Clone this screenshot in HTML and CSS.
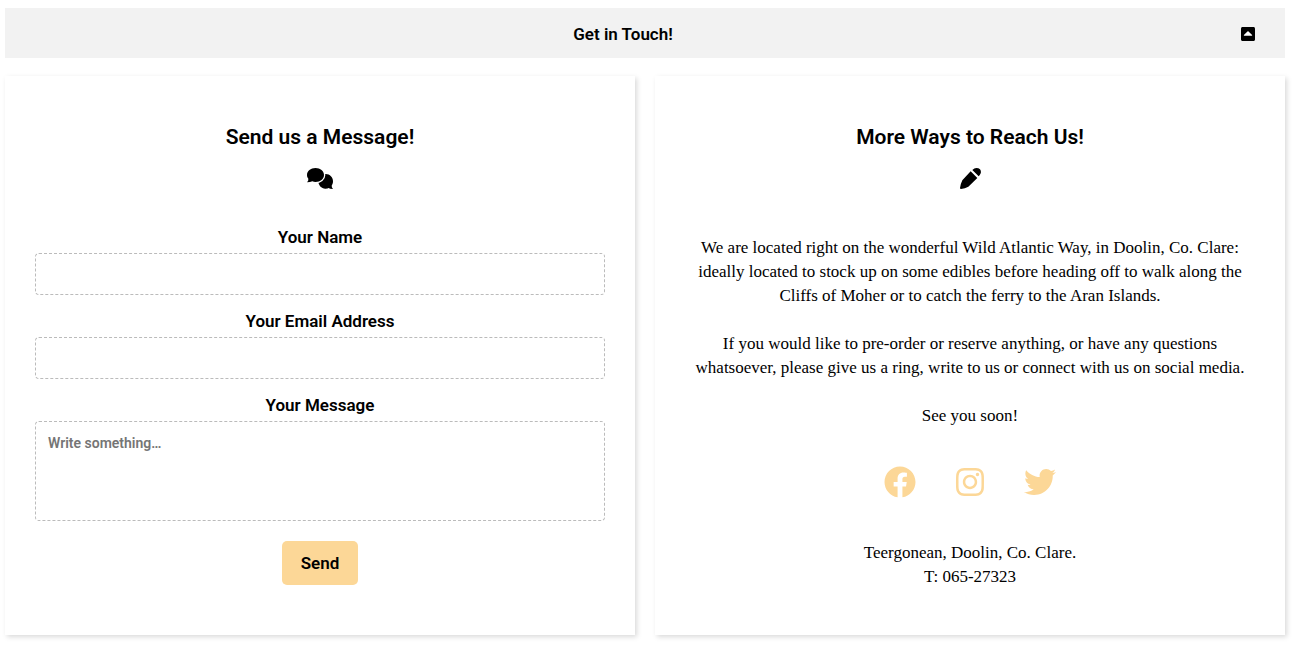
FILE: index.html
```html
<!DOCTYPE html>
<html lang="en">
<head>
<meta charset="utf-8">
<meta name="viewport" content="width=device-width, initial-scale=1">
<title>Get in Touch</title>
<link rel="stylesheet" href="styles.css">
</head>
<body>
<main class="contact">
  <button class="contact-toggle" type="button" aria-expanded="true" aria-controls="contact-panels">
    <span class="toggle-title">Get in Touch!</span>
    <svg class="icon-caret" viewBox="0 32 448 448" aria-hidden="true"><path d="M0 432V80c0-26.51 21.49-48 48-48h352c26.51 0 48 21.49 48 48v352c0 26.51-21.49 48-48 48H48c-26.51 0-48-21.49-48-48z"/><path class="caret-arrow" d="M355.515 291.515l-123.03-123.029a12 12 0 0 0-16.97 0L92.485 291.515c-7.56 7.56-2.206 20.485 8.485 20.485h246.059c10.691 0 16.045-12.926 8.486-20.485z"/></svg>
  </button>
  <div class="panels" id="contact-panels">
    <section class="card">
      <h2 class="card-title">Send us a Message!</h2>
      <svg class="icon-chat" viewBox="0 0 78 63" aria-hidden="true"><path d="M56 18C69 18 78 28 78 40C78 46 76 50 74 53Q74 59 78 63Q69 63 64 60C61 62 58 62 55 62C43 62 34 52 34 40C34 28 44 18 56 18z"/><path class="chat-front" d="M25.500 0C40 0 51 9 51 21S40 42 25.500 42C22 42 19 41 16 40Q10 43 0 43Q5 38 4 32C1 29 0 25 0 21C0 9 11 0 25.500 0z"/></svg>
      <form class="message-form">
        <label class="field-label" for="name">Your Name</label>
        <input class="field" type="text" id="name" name="name">
        <label class="field-label" for="email">Your Email Address</label>
        <input class="field" type="email" id="email" name="email">
        <label class="field-label" for="message">Your Message</label>
        <textarea class="field field-message" id="message" name="message" placeholder="Write something…"></textarea>
        <button class="send" type="submit">Send</button>
      </form>
    </section>
    <section class="card">
      <h2 class="card-title">More Ways to Reach Us!</h2>
      <svg class="icon-pencil" viewBox="0 0 63 63" aria-hidden="true"><path d="M32 10L52 30L25 56Q15 61 3 63Q0 63 0 60Q2 47 7 37zM37 6Q43 0 49 0Q56 0 60 4Q65 11 61 18Q59 22 56 25z"/></svg>
      <div class="info">
        <p class="text">We are located right on the wonderful Wild Atlantic Way, in Doolin, Co. Clare:<br>ideally located to stock up on some edibles before heading off to walk along the<br>Cliffs of Moher or to catch the ferry to the Aran Islands.</p>
        <p class="text">If you would like to pre-order or reserve anything, or have any questions<br>whatsoever, please give us a ring, write to us or connect with us on social media.</p>
        <p class="text">See you soon!</p>
      </div>
      <nav class="social" aria-label="Social media">
        <a class="social-link" href="#facebook" aria-label="Facebook"><svg class="icon-social" viewBox="0 0 512 512" aria-hidden="true"><path d="M504 256C504 119 393 8 256 8S8 119 8 256c0 123.78 90.69 226.38 209.25 245V327.69h-63V256h63v-54.64c0-62.15 37-96.48 93.67-96.48 27.14 0 55.52 4.84 55.52 4.84v61h-31.28c-30.8 0-40.41 19.12-40.41 38.73V256h68.78l-11 71.69h-57.78V501C413.31 482.38 504 379.78 504 256z"/></svg></a>
        <a class="social-link" href="#instagram" aria-label="Instagram"><svg class="icon-social" viewBox="-32 0 512 512" aria-hidden="true"><path d="M224.1 141c-63.6 0-114.9 51.3-114.9 114.9s51.3 114.9 114.9 114.9S339 319.5 339 255.9 287.7 141 224.1 141zm0 189.6c-41.1 0-74.7-33.5-74.7-74.7s33.5-74.7 74.7-74.7 74.7 33.5 74.7 74.7-33.6 74.7-74.7 74.7zm146.4-194.3c0 14.9-12 26.8-26.8 26.8-14.9 0-26.8-12-26.8-26.8s12-26.8 26.8-26.8 26.8 12 26.8 26.8zm76.1 27.2c-1.7-35.9-9.9-67.7-36.2-93.9-26.2-26.2-58-34.4-93.9-36.2-37-2.1-147.9-2.1-184.9 0-35.8 1.7-67.6 9.9-93.9 36.1s-34.4 58-36.2 93.9c-2.1 37-2.1 147.9 0 184.9 1.7 35.9 9.9 67.7 36.2 93.9s58 34.4 93.9 36.2c37 2.1 147.9 2.1 184.9 0 35.9-1.7 67.7-9.9 93.9-36.2 26.2-26.2 34.4-58 36.2-93.9 2.1-37 2.1-147.8 0-184.8zM398.8 388c-7.8 19.6-22.9 34.7-42.6 42.6-29.5 11.7-99.5 9-132.1 9s-102.7 2.6-132.1-9c-19.6-7.8-34.7-22.9-42.6-42.6-11.7-29.5-9-99.5-9-132.1s-2.6-102.7 9-132.1c7.8-19.6 22.9-34.7 42.6-42.6 29.5-11.7 99.5-9 132.1-9s102.7-2.6 132.1 9c19.6 7.8 34.7 22.9 42.6 42.6 11.7 29.5 9 99.5 9 132.1s2.7 102.7-9 132.1z"/></svg></a>
        <a class="social-link" href="#twitter" aria-label="Twitter"><svg class="icon-social" viewBox="0 0 512 512" aria-hidden="true"><path d="M459.37 151.716c.325 4.548.325 9.097.325 13.645 0 138.72-105.583 298.558-298.558 298.558-59.452 0-114.68-17.219-161.137-47.106 8.447.974 16.568 1.299 25.34 1.299 49.055 0 94.213-16.568 130.274-44.832-46.132-.975-84.792-31.188-98.112-72.772 6.498.974 12.995 1.624 19.818 1.624 9.421 0 18.843-1.3 27.614-3.573-48.081-9.747-84.143-51.98-84.143-102.985v-1.299c13.969 7.797 30.214 12.67 47.431 13.319-28.264-18.843-46.781-51.005-46.781-87.391 0-19.492 5.197-37.36 14.294-52.954 51.655 63.675 129.3 105.258 216.365 109.807-1.624-7.797-2.599-15.918-2.599-24.04 0-57.828 46.782-104.934 104.934-104.934 30.213 0 57.502 12.67 76.67 33.137 23.715-4.548 46.456-13.32 66.599-25.34-7.798 24.366-24.366 44.833-46.132 57.827 21.117-2.273 41.584-8.122 60.426-16.243-14.292 20.791-32.161 39.308-52.628 54.253z"/></svg></a>
      </nav>
      <address class="text">Teergonean, Doolin, Co. Clare.<br>T: 065-27323</address>
    </section>
  </div>
</main>
</body>
</html>
```
FILE: styles.css
```css
* {
  box-sizing: border-box;
}

body {
  margin: 0;
  padding: 8px 7px 8px 5px;
  background: #fff;
  color: #000;
  font-family: Roboto, "Open Sans", sans-serif;
}

svg {
  display: block;
}

.contact {
  display: grid;
  gap: 18px;
}

.contact-toggle {
  display: flex;
  align-items: center;
  width: 100%;
  padding: 14px 30px 12px 0;
  border: 0;
  background: #f2f2f2;
  color: inherit;
  font: 600 17px/24px Roboto, "Open Sans", sans-serif;
}

.toggle-title {
  flex: 1;
  text-align: center;
}

.icon-caret {
  width: 14px;
  height: 14px;
}

.caret-arrow {
  fill: #fff;
}

.panels {
  display: grid;
  grid-template-columns: 1fr 1fr;
  gap: 20px;
}

.card {
  display: flex;
  flex-direction: column;
  align-items: center;
  padding: 46px 30px;
  background: #fff;
  box-shadow: 2px 2px 5px rgba(0, 0, 0, 0.15);
  text-align: center;
}

.card-title {
  margin: 0 0 16px;
  font-size: 21px;
  font-weight: 600;
  line-height: 30px;
}

.icon-chat {
  width: 26px;
  height: 21px;
}

.chat-front {
  stroke: #fff;
  stroke-width: 8px;
  paint-order: stroke;
}

.icon-pencil {
  width: 21px;
  height: 21px;
}

.message-form {
  display: flex;
  flex-direction: column;
  align-items: center;
  width: 100%;
  margin-top: 36px;
}

.field-label {
  margin-bottom: 4px;
  font-size: 17px;
  font-weight: 600;
  line-height: 24px;
}

.field {
  width: 100%;
  height: 42px;
  margin: 0 0 14px;
  padding: 12px;
  border: 1px dashed #bbb;
  border-radius: 4px;
  background: #fff;
  color: inherit;
  font: 600 14px/18px Roboto, "Open Sans", sans-serif;
}

.field-message {
  height: 100px;
  margin-bottom: 20px;
  resize: none;
}

.field::placeholder {
  color: #757575;
}

.send {
  height: 44px;
  padding: 0 19px;
  border: 0;
  border-radius: 5px;
  background: #fcd797;
  color: #000;
  font: 600 17px/24px Roboto, "Open Sans", sans-serif;
}

.info {
  display: grid;
  gap: 24px;
  margin-top: 47px;
}

.text {
  margin: 0;
  font: 400 17px/24px "Liberation Serif", serif;
}

.social {
  display: flex;
  gap: 38px;
  margin: 38px 0 43px;
}

.social-link {
  color: #fcd797;
}

.icon-social {
  width: 32px;
  height: 32px;
  fill: currentColor;
}

@media (max-width: 760px) {
  .panels {
    grid-template-columns: 1fr;
  }
}
```
